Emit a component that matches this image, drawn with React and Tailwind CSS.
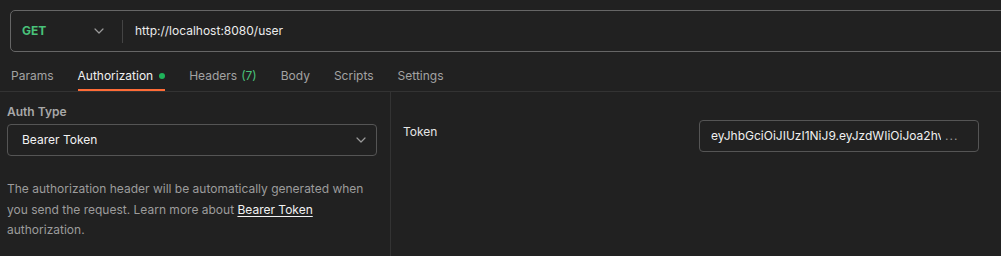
import React from "react";

const Chevron = ({ className }) => (
  <svg className={className} width="10" height="6" viewBox="0 0 10 6" fill="none">
    <path d="M1 1l4 4 4-4" stroke="#9a9a9a" strokeWidth="1.2" strokeLinecap="round" strokeLinejoin="round" />
  </svg>
);

export default function App() {
  const tabs = [
    { label: "Params" },
    { label: "Authorization", active: true, dot: true },
    { label: "Headers", count: "(7)" },
    { label: "Body" },
    { label: "Scripts" },
    { label: "Settings" },
  ];
  return (
    <div
      className="w-[1001px] h-[256px] overflow-hidden bg-[#212121] text-[12px] text-[#e6e6e6]"
      style={{ fontFamily: "Inter, 'Noto Sans', sans-serif" }}
    >
      <div className="pt-[10px] pl-[10px]">
        <div className="flex items-center h-[42px] w-[1010px] border border-[#666] rounded-[5px]">
          <div className="flex items-center w-[111px] pl-[11px] pr-[18px] justify-between">
            <span className="font-bold text-[#49c27a]">GET</span>
            <Chevron />
          </div>
          <div className="w-px h-[23px] bg-[#444]" />
          <span className="pl-[12px] text-[#ececec]">http://localhost:8080/user</span>
        </div>
      </div>
      <div className="flex items-stretch h-[40px] border-b border-[#333] pl-[11px] gap-[24px] pt-[8px]">
        {tabs.map((t) => (
          <div
            key={t.label}
            className={`flex items-center gap-[6px] relative ${t.active ? "text-[#f0f0f0]" : "text-[#a3a3a3]"}`}
          >
            <span>{t.label}</span>
            {t.count && <span className="text-[#49c27a] -ml-[2px]">{t.count}</span>}
            {t.dot && <span className="w-[6px] h-[6px] rounded-full bg-[#1fb35a]" />}
            {t.active && <div className="absolute left-0 right-0 bottom-0 h-[2px] bg-[#ff6c37]" />}
          </div>
        ))}
      </div>
      <div className="flex h-[164px]">
        <div className="w-[391px] shrink-0 border-r border-[#333] pl-[7px] pr-[13px] pt-[11px]">
          <div className="font-semibold text-[#a8a8a8] leading-[18px]">Auth Type</div>
          <div className="mt-[3px] flex items-center justify-between h-[32px] border border-[#555] rounded-[4px] pl-[14px] pr-[10px]">
            <span className="text-[#f2f2f2]">Bearer Token</span>
            <Chevron />
          </div>
          <p className="mt-[23px] text-[#9c9c9c] leading-[20.5px]">
            The authorization header will be automatically generated when you send the request. Learn more about{" "}
            <span className="text-[#f2f2f2] underline underline-offset-2">Bearer Token</span> authorization.
          </p>
        </div>
        <div className="flex-1 flex items-start pl-[12px] pt-[28px]">
          <div className="w-[296px] mt-[3px] leading-[18px] text-[#e6e6e6]">Token</div>
          <div className="w-[280px] h-[32px] border border-[#555] rounded-[4px] flex items-center pl-[11px] pr-[10px]">
            <span className="overflow-hidden whitespace-nowrap w-[230px] text-[#f0f0f0]">
              eyJhbGciOiJIUzI1NiJ9.eyJzdWIiOiJoa2hvbmciLCJpYXQiOjE3MDk
            </span>
            <span className="ml-[4px] tracking-[1px] text-[#9a9a9a]">...</span>
          </div>
        </div>
      </div>
    </div>
  );
}
